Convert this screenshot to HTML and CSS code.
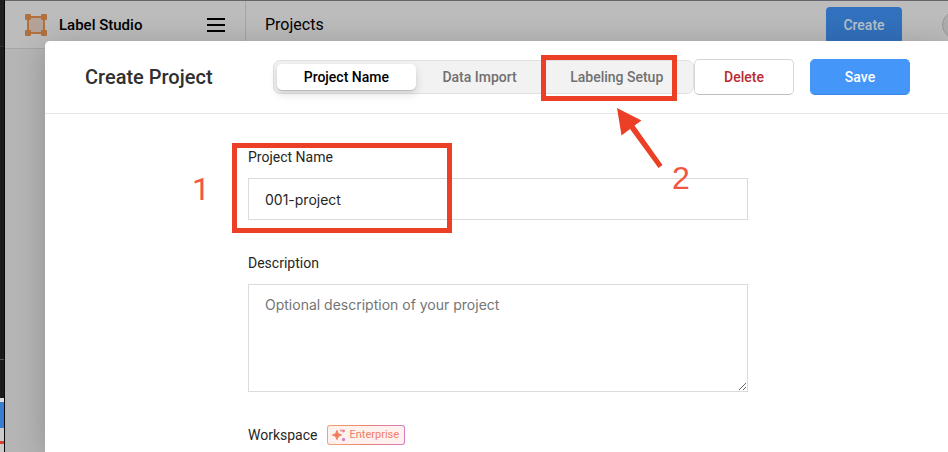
FILE: index.html
```html
<!DOCTYPE html>
<html lang="en">
<head>
<meta charset="utf-8">
<meta name="viewport" content="width=device-width, initial-scale=1">
<title>Label Studio</title>
<link rel="stylesheet" href="styles.css">
</head>
<body>
<div class="desktop">
  <div class="edge" aria-hidden="true">
    <div class="edge-top"></div>
    <div class="edge-mid"></div>
    <div class="edge-low"></div>
    <div class="edge-button"></div>
    <div class="edge-end"></div>
  </div>
  <div class="app">
    <header class="topbar">
      <div class="brand">
        <svg class="logo" width="24" height="24" viewBox="0 0 24 24" aria-hidden="true">
          <rect x="4" y="4" width="16" height="16" fill="#b5a397" stroke="#b0713f" stroke-width="2"/>
          <g fill="#b0713f"><rect x="1" y="1" width="6" height="6" rx="1"/><rect x="17" y="1" width="6" height="6" rx="1"/><rect x="1" y="17" width="6" height="6" rx="1"/><rect x="17" y="17" width="6" height="6" rx="1"/></g>
        </svg>
        <span class="brand-name">Label Studio</span>
        <button class="menu" type="button" aria-label="Menu"><span></span><span></span><span></span></button>
      </div>
      <span class="crumb">Projects</span>
      <button class="create" type="button">Create</button>
      <span class="avatar"></span>
    </header>
  </div>
</div>

<main class="modal">
  <header class="modal-head">
    <h1 class="title">Create Project</h1>
    <nav class="tabs">
      <button class="tab tab-active" type="button">Project Name</button>
      <button class="tab" type="button">Data Import</button>
      <button class="tab" type="button">Labeling Setup</button>
    </nav>
    <div class="actions">
      <button class="btn btn-delete" type="button">Delete</button>
      <button class="btn btn-save" type="button">Save</button>
    </div>
  </header>
  <form class="form">
    <div class="field">
      <label class="label" for="name">Project Name</label>
      <input class="control" id="name" type="text" value="001-project">
    </div>
    <div class="field">
      <label class="label" for="description">Description</label>
      <textarea class="control area" id="description" placeholder="Optional description of your project"></textarea>
    </div>
    <div class="workspace">
      <span class="label">Workspace</span>
      <span class="badge">
        <svg width="14" height="14" viewBox="0 0 14 14" aria-hidden="true">
          <path d="M5 2.500Q5.500 6.500 9.500 7Q5.500 7.500 5 11.500Q4.500 7.500 .5 7Q4.500 6.500 5 2.500Z" fill="#f07c5c" stroke="#f07c5c"/>
          <circle cx="9" cy="2.5" r="1" fill="#ee8575"/><circle cx="11.5" cy="3" r="1.4" fill="#e58089"/><circle cx="11.5" cy="11.5" r="1.7" fill="#d884bd"/>
        </svg>
        Enterprise
      </span>
    </div>
  </form>
</main>

<div class="mark mark-name"></div>
<div class="mark mark-setup"></div>
<span class="digit digit-one">1</span>
<span class="digit digit-two">2</span>
<svg class="arrow" width="50" height="64" viewBox="0 0 50 64" aria-hidden="true">
  <path d="M2 3 26.500 15.500 19.500 20.500 47.500 60 43.500 63 15 24 6.500 30.500Z" fill="#eb4026"/>
</svg>
</body>
</html>
```

FILE: styles.css
```css
* { box-sizing: border-box; }
body {
  margin: 0;
  overflow: hidden;
  font: 14px/20px Roboto, "Liberation Sans", sans-serif;
  color: #262626;
  background: #b5b5b5;
}
button, input, textarea { font: inherit; color: inherit; margin: 0; }

.desktop { display: flex; min-height: 100vh; }
.edge {
  display: flex;
  flex-direction: column;
  width: 5px;
  background: #1b1b1b;
  border-right: 1px solid #080808;
}
.edge-top { height: 47px; background: #202020; border-bottom: 1px solid #333; }
.edge-mid { height: 313px; border-bottom: 1px solid #555; }
.edge-low { height: 38px; }
.edge-button { height: 30px; background: #397dd0; border-top: 4px solid #ddd; }
.edge-end { flex: 1; background: linear-gradient(#ccc 13px, #d9412c 13px, #d9412c 16px, #ccc 16px); }

.app { flex: 1; border-top: 1px solid #66636a; }
.topbar {
  display: flex;
  align-items: center;
  height: 48px;
  background: #bcbcbc;
  border-bottom: 1px solid #a6a6a6;
  color: #000;
}
.brand {
  display: flex;
  align-items: center;
  width: 241px;
  height: 100%;
  padding: 0 20px 0 19px;
  border-right: 1px solid #a6a6a6;
}
.brand-name { margin-left: 11px; font-weight: 500; font-size: 15px; }
.menu {
  display: flex;
  flex-direction: column;
  gap: 4px;
  width: 18px;
  margin-left: auto;
  padding: 0;
  border: 0;
  background: none;
}
.menu span { height: 2px; background: #000; }
.crumb { margin-left: 19px; font-size: 16px; }
.create {
  width: 76px;
  height: 36px;
  margin-left: auto;
  border: 0;
  border-radius: 4px;
  background: #3271bd;
  color: #b9c1ca;
  font-weight: 500;
}
.avatar {
  width: 28px;
  height: 28px;
  margin: 0 -22px 0 40px;
  border: 1px solid #999;
  border-radius: 50%;
  background: #adadad;
}

.modal {
  position: absolute;
  inset: 41px 0 0 45px;
  overflow: hidden;
  border-top-left-radius: 5px;
  background: #fff;
}
.desktop::after {
  content: "";
  position: absolute;
  inset: 41px 0 0 45px;
  box-shadow: 0 4px 30px rgba(0, 0, 0, .2);
}
.modal-head {
  display: flex;
  align-items: center;
  height: 73px;
  padding: 0 38px 0 40px;
  border-bottom: 1px solid #e6e6e6;
}
.title { flex: 1; margin: 0; color: #303030; font-size: 20px; line-height: 24px; font-weight: 500; }
.tabs {
  display: grid;
  grid-template-columns: repeat(3, auto);
  width: 421px;
  height: 34px;
  padding: 3px;
  border: 1px solid #e0e0e0;
  border-radius: 7px;
  background: #f2f2f2;
}
.tab {
  padding: 0;
  border: 0;
  border-radius: 5px;
  background: none;
  color: #707070;
  font-weight: 500;
}
.tab-active {
  background: #fff;
  color: #000;
  box-shadow: 0 1px 1px rgba(0, 0, 0, .15), 0 4px 10px rgba(0, 0, 0, .14);
}
.actions { display: flex; gap: 16px; }
.btn {
  width: 100px;
  height: 36px;
  border: 1px solid #d6d6d6;
  border-bottom-color: #bdbdbd;
  border-radius: 5px;
  background: #fff;
  font-weight: 500;
}
.btn-delete { color: #b92b31; }
.btn-save { border-color: #4496f8; border-bottom-color: #3b86e3; background: #4496f8; color: #fff; }

.form {
  display: flex;
  flex-direction: column;
  gap: 33px;
  width: 100%;
  max-width: 703px;
  padding: 33px 0 0 203px;
}
.field { display: flex; flex-direction: column; gap: 11px; }
.control {
  width: 100%;
  height: 42px;
  padding: 10px 16px;
  border: 1px solid #dbdbdb;
  border-radius: 0;
  outline: 0;
  background: #fff;
  font-family: Inter, Roboto, sans-serif;
}
.area { height: 108px; resize: both; }
.area::placeholder { color: #757575; }
.workspace { display: flex; align-items: center; gap: 9px; }
.badge {
  display: flex;
  align-items: center;
  gap: 4px;
  height: 20px;
  padding: 0 5px 0 4px;
  border: 1px solid transparent;
  border-radius: 3px;
  background: linear-gradient(#fff1ed, #fff1ed) padding-box, linear-gradient(90deg, #f6a46b, #ee8070 50%, #d77dc4) border-box;
  color: #f0806a;
  font-size: 11px;
}

.mark { position: absolute; border: 5px solid #eb4026; }
.mark-name { left: 232px; top: 143px; width: 220px; height: 90px; }
.mark-setup { left: 541px; top: 55px; width: 136px; height: 46px; }
.digit {
  position: absolute;
  color: #ef5744;
  font: 32px/36px "Liberation Sans", Arial, sans-serif;
}
.digit-one { left: 192px; top: 171px; font-family: Roboto, sans-serif; }
.digit-two { left: 672px; top: 160px; }
.arrow { position: absolute; left: 615px; top: 105px; }
```
